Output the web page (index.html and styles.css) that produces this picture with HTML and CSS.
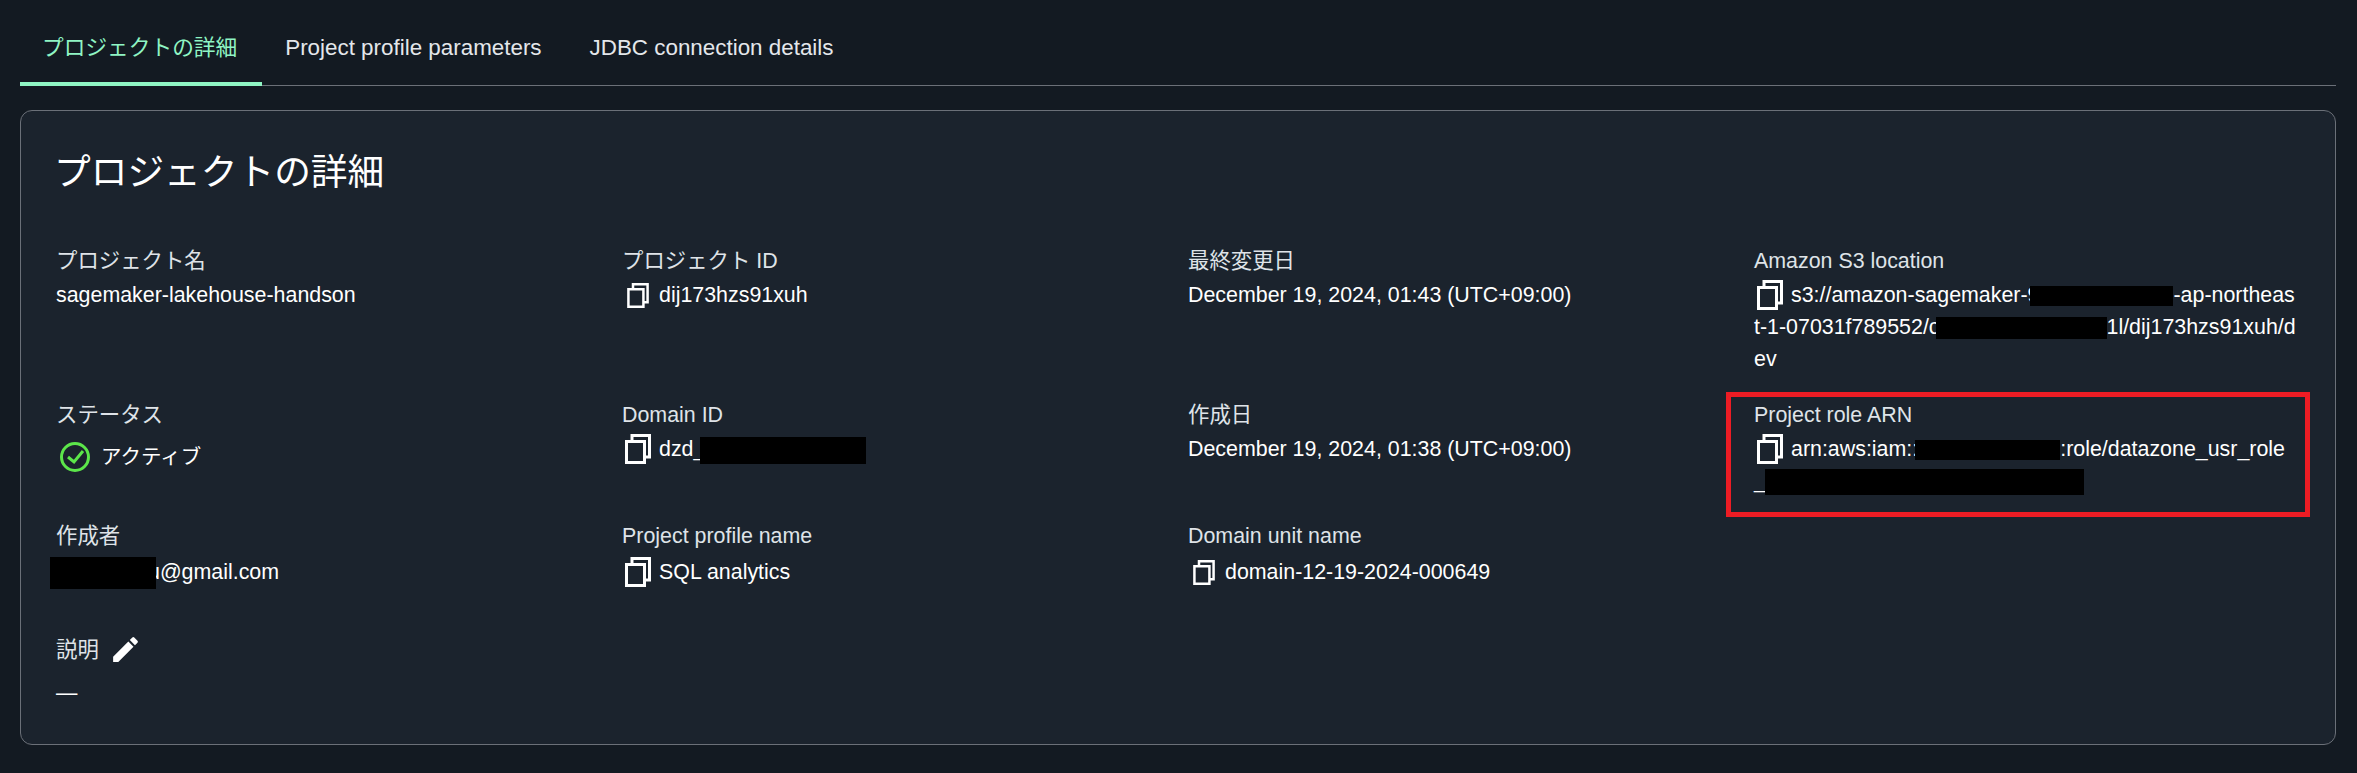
FILE: index.html
```html
<!DOCTYPE html>
<html lang="ja">
<head>
    <meta charset="UTF-8">
    <title>プロジェクトの詳細</title>
    <link rel="stylesheet" href="styles.css">
</head>
<body>
    <div class="page">
        <div class="tabs">
            <div class="tab active">プロジェクトの詳細</div>
            <div class="tab">Project profile parameters</div>
            <div class="tab">JDBC connection details</div>
        </div>

        <div class="card">
            <h2 class="card-title">プロジェクトの詳細</h2>

            <div class="details">
                <div class="item">
                    <div class="label">プロジェクト名</div>
                    <div class="value">sagemaker-lakehouse-handson</div>
                </div>
                <div class="item">
                    <div class="label">プロジェクト ID</div>
                    <div class="value with-icon">
                        <svg class="copy small" viewBox="0 0 26 30"><path d="M1.5 7.5h18v21h-18zM7 7.5v-6h17.5v21.5h-5"/></svg>
                        <span>dij173hzs91xuh</span>
                    </div>
                </div>
                <div class="item">
                    <div class="label">最終変更日</div>
                    <div class="value">December 19, 2024, 01:43 (UTC+09:00)</div>
                </div>
                <div class="item">
                    <div class="label">Amazon S3 location</div>
                    <div class="value with-icon">
                        <svg class="copy" viewBox="0 0 26 30"><path d="M1.5 7.5h18v21h-18zM7 7.5v-6h17.5v21.5h-5"/></svg>
                        <span class="long">s3://amazon-sagemaker-9<span class="redact r-s3a"></span>-ap-northeas</span>
                    </div>
                    <div class="value long">t-1-07031f789552/c<span class="redact r-s3b"></span>1l/dij173hzs91xuh/d<br>ev</div>
                </div>

                <div class="item">
                    <div class="label">ステータス</div>
                    <div class="value status">
                        <svg class="check" viewBox="0 0 30 30"><circle cx="15" cy="15" r="13.5"/><path d="M8 15l6 5 9-11"/></svg>
                        <span>アクティブ</span>
                    </div>
                </div>
                <div class="item">
                    <div class="label">Domain ID</div>
                    <div class="value with-icon">
                        <svg class="copy" viewBox="0 0 26 30"><path d="M1.5 7.5h18v21h-18zM7 7.5v-6h17.5v21.5h-5"/></svg>
                        <span>dzd_<span class="redact r-domain"></span></span>
                    </div>
                </div>
                <div class="item">
                    <div class="label">作成日</div>
                    <div class="value">December 19, 2024, 01:38 (UTC+09:00)</div>
                </div>
                <div class="item">
                    <div class="label">Project role ARN</div>
                    <div class="value with-icon">
                        <svg class="copy" viewBox="0 0 26 30"><path d="M1.5 7.5h18v21h-18zM7 7.5v-6h17.5v21.5h-5"/></svg>
                        <span class="long">arn:aws:iam::<span class="redact r-arna"></span>:role/datazone_usr_role</span>
                    </div>
                    <div class="value long">_<span class="redact r-arnb"></span></div>
                    <div class="highlight"></div>
                </div>

                <div class="item row-low">
                    <div class="label">作成者</div>
                    <div class="value email"><span class="redact r-email"></span>u@gmail.com</div>
                </div>
                <div class="item row-low">
                    <div class="label">Project profile name</div>
                    <div class="value with-icon">
                        <svg class="copy" viewBox="0 0 26 30"><path d="M1.5 7.5h18v21h-18zM7 7.5v-6h17.5v21.5h-5"/></svg>
                        <span>SQL analytics</span>
                    </div>
                </div>
                <div class="item row-low">
                    <div class="label">Domain unit name</div>
                    <div class="value with-icon">
                        <svg class="copy small" viewBox="0 0 26 30"><path d="M1.5 7.5h18v21h-18zM7 7.5v-6h17.5v21.5h-5"/></svg>
                        <span>domain-12-19-2024-000649</span>
                    </div>
                </div>
                <div class="item"></div>

                <div class="item">
                    <div class="label label-edit">説明
                        <svg class="pencil" viewBox="0 0 24 24"><path d="M3 17.25V21h3.75L17.81 9.94l-3.75-3.75L3 17.25zM20.71 7.04a1 1 0 0 0 0-1.41l-2.34-2.34a1 1 0 0 0-1.41 0l-1.83 1.83 3.75 3.75 1.83-1.83z"/></svg>
                    </div>
                    <div class="value">—</div>
                </div>
            </div>
        </div>
    </div>
</body>
</html>
```

FILE: styles.css
```css
/* --- Global Setup --- */
html, body {
    margin: 0;
    padding: 0;
    height: 100%;
    background-color: #131a22;
    font-family: 'Liberation Sans', 'Noto Sans CJK JP', sans-serif;
    font-size: 21.4px;
    color: #fff;
    overflow: hidden;
}

.page { padding: 0 21px 0 20px; }

/* --- Tabs --- */
.tabs {
    display: flex;
    height: 85px;
    border-bottom: 1px solid #6b7078;
}
.tab {
    padding: 36px 25px 0 23px;
    font-size: 22.4px;
    color: #e4e7eb;
    line-height: 24px;
}
.tab.active {
    padding-left: 22px;
    font-size: 21.7px;
    color: #8ff5c4;
    border-bottom: 4px solid #8ff5c4;
    margin-bottom: -1px;
}

/* --- Card --- */
.card {
    margin-top: 24px;
    height: 635px;
    box-sizing: border-box;
    padding: 38px 35px 0;
    background-color: #1b232d;
    border: 1px solid #6b7078;
    border-radius: 12px;
}
.card-title {
    margin: -1px 0 0 -2px;
    font-size: 36.7px;
    font-weight: 400;
    line-height: 50px;
}

.details {
    display: grid;
    grid-template-columns: repeat(4, 566px);
    grid-template-rows: 154px 121px 110px auto;
    margin-top: 50px;
}
.item { position: relative; }

.label {
    color: #dfe3e8;
    line-height: 26px;
    margin-bottom: 5px;
}
.row-low .label { margin-bottom: 7px; }
.label-edit { display: flex; align-items: center; gap: 10px; margin-bottom: 11px; }

.value { line-height: 32px; }
.with-icon { display: flex; align-items: center; }
.long { white-space: nowrap; }
.status { display: flex; align-items: center; gap: 11px; padding: 8px 0 0 4px; font-size: 20.5px; }
.email { margin-left: -6px; }

/* --- Icons --- */
.copy {
    width: 26px;
    height: 30px;
    margin: 0 8px 0 3px;
    flex: none;
    fill: none;
    stroke: #fff;
    stroke-width: 3;
}
.copy.small { width: 22px; height: 25px; margin: 0 10px 0 5px; }
.check { width: 30px; height: 30px; flex: none; fill: none; stroke: #5ce64a; stroke-width: 3; }
.pencil { width: 33px; height: 33px; fill: #fff; }

/* --- Redactions and annotation --- */
.redact { display: inline-block; background: #000; vertical-align: middle; }
.r-s3a { width: 143px; height: 20px; margin-left: -9px; }
.r-s3b { width: 171px; height: 22px; margin-left: -4px; }
.r-arna { width: 145px; height: 20px; margin-left: -3px; }
.r-arnb { width: 319px; height: 26px; margin-left: -1px; }
.r-domain { width: 166px; height: 27px; margin-left: -5px; }
.r-email { width: 106px; height: 32px; margin-right: -8px; position: relative; }

.highlight {
    position: absolute;
    top: -10px;
    left: -28px;
    width: 584px;
    height: 125px;
    box-sizing: border-box;
    border: 5px solid #ed1c24;
}
```
